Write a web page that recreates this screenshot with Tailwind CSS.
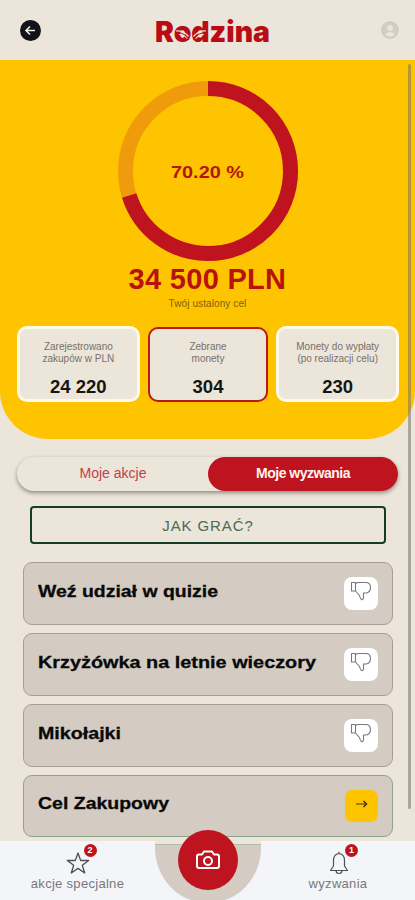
<!DOCTYPE html>
<html lang="pl">
<head>
<meta charset="utf-8">
<meta name="viewport" content="width=device-width, initial-scale=1">
<title>Rodzina</title>
<script src="https://cdn.jsdelivr.net/npm/@tailwindcss/browser@4"></script>
</head>
<body class="bg-[#ece5d9] font-['Liberation_Sans',sans-serif]">
<svg class="hidden">
  <symbol id="thumb" viewBox="0 0 22 20">
    <path d="M1.500 1.500h4v8.500h-4zM5.500 2.500Q7 1.500 9 1.500h7.500Q20.500 2 20.500 6.500T16.500 12H13.500v5Q13 19 11.500 18.700 10 17 9.500 14.500L5.500 10" fill="none" stroke="#77797c" stroke-width="1.100" stroke-linejoin="round"/>
  </symbol>
</svg>
<div class="relative flex h-[900px] w-[415px] flex-col overflow-hidden">
  <header class="flex h-[60px] shrink-0 items-center justify-between pr-[16px] pl-[20px]">
    <svg class="size-[21px]" viewBox="0 0 21 21"><circle cx="10.500" cy="10.500" r="10.500" fill="#111319"/><path d="M15 10.500H6.500M10 6.500l-4 4 4 4" fill="none" stroke="#f1ece4" stroke-width="1.600"/></svg>
    <svg class="ml-[1px] h-[44px] w-[124px] overflow-visible" viewBox="0 0 124 44">
      <text x="5" y="33.500" textLength="115" lengthAdjust="spacingAndGlyphs" font-family="Inter, sans-serif" font-weight="900" font-size="28.500" fill="#b90c16">Rodzina</text>
      <path d="M26 23q7-1 12.500 5.500M29 26.500q5 0 8.500 4M56 23q-7-1-12.500 5.500M54 26.500q-5 0-8.500 4" fill="none" stroke="#ece5d9" stroke-width="1.200"/>
      <path d="M28.500 25q6-.5 10.500 7M54 25q-6-.5-10.500 7" fill="none" stroke="#b90c16" stroke-width="1"/>
    </svg>
    <svg class="size-[18px]" viewBox="0 0 18 18"><circle cx="9" cy="9" r="8" fill="#d5cec5" stroke="#cfc8bf" stroke-width="1.500"/><circle cx="9" cy="7" r="2.800" fill="#ece5d9"/><path d="M4 14q5-6 10 0-5 3-10 0z" fill="#ece5d9"/></svg>
  </header>

  <section class="flex h-[379px] shrink-0 flex-col items-center rounded-b-[48px] bg-[#fec400] pt-[21px]">
    <div class="grid size-[180px] place-items-center">
      <svg class="col-start-1 row-start-1 size-[180px] -rotate-90" viewBox="0 0 180 180" fill="none" stroke-width="15">
        <circle cx="90" cy="90" r="82.500" stroke="#f09b0c"/>
        <circle cx="90" cy="90" r="82.500" stroke="#bf141f" pathLength="100" stroke-dasharray="70.200 100"/>
      </svg>
      <svg class="col-start-1 row-start-1 mt-[2px] h-[20px] w-[74px]" viewBox="0 0 74 20"><text x="0" y="16" textLength="73" lengthAdjust="spacingAndGlyphs" font-weight="700" font-size="17" fill="#b3140f">70.20 %</text></svg>
    </div>
    <div class="mt-[3px] h-[30px] text-[29px] leading-[30px] font-bold tracking-[0.300px] whitespace-nowrap text-[#b8120f]">34 500 PLN</div>
    <div class="mt-[4px] text-[10px] leading-[12px] tracking-[0.100px] text-[#80620f]">Twój ustalony cel</div>
    <div class="mt-[16px] flex w-full gap-[8px] pr-[16px] pl-[17px] text-center text-[10px] leading-[12px] whitespace-nowrap text-[#77716b]">
      <div class="h-[76px] flex-1 rounded-[10px] border-[3px] border-[#fff9e9] bg-[#ece5d9] pt-[12px]"><p>Zarejestrowano<br>zakupów w PLN</p><p class="mt-[12px] text-[18.500px] leading-[20px] font-bold text-[#151515]">24 220</p></div>
      <div class="mt-[1px] h-[75px] flex-1 rounded-[10px] border-2 border-[#bb1915] bg-[#ece5d9] pt-[12px]"><p>Zebrane<br>monety</p><p class="mt-[12px] text-[18.500px] leading-[20px] font-bold text-[#151515]">304</p></div>
      <div class="h-[76px] flex-1 rounded-[10px] border-[3px] border-[#fff9e9] bg-[#ece5d9] pt-[12px]"><p>Monety do wypłaty<br>(po realizacji celu)</p><p class="mt-[12px] text-[18.500px] leading-[20px] font-bold text-[#151515]">230</p></div>
    </div>
  </section>

  <div class="mt-[18px] mr-[17px] ml-[17px] flex h-[34px] shrink-0 rounded-full text-center text-[14px] leading-[33px] shadow-[0_2px_4px_rgba(0,0,0,0.4)]">
    <div class="w-[191px] pl-[1px] text-[#bf404c]">Moje akcje</div>
    <div class="flex-1 rounded-full bg-[#bd141f] font-bold tracking-[-0.500px] text-[#fff3ee]">Moje wyzwania</div>
  </div>
  <div class="mt-[15px] ml-[30px] h-[38px] w-[356px] shrink-0 rounded-[4px] border-2 border-[#143d27] text-center text-[15px] leading-[35px] tracking-[0.900px] text-[#4b6954]">JAK GRAĆ?</div>

  <main class="mt-[18px] ml-[23px] flex w-[370px] shrink-0 flex-col gap-[8px]">
    <div class="flex h-[63px] justify-between rounded-[9px] border border-[#a49e96] bg-[#d4ccc2] pr-[14px] pl-[14px]">
      <svg class="mt-[14px] h-[26px] w-[181px]" viewBox="0 0 181 26"><text x="0" y="19.500" textLength="180" lengthAdjust="spacingAndGlyphs" font-weight="700" font-size="17" fill="#090909" stroke="#090909" stroke-width=".3">Weź udział w quizie</text></svg>
      <div class="mt-[14px] flex h-[33px] w-[34px] justify-center rounded-[8px] bg-white pt-[4px]"><svg class="h-[20px] w-[22px]"><use href="#thumb"/></svg></div>
    </div>
    <div class="flex h-[63px] justify-between rounded-[9px] border border-[#a49e96] bg-[#d4ccc2] pr-[14px] pl-[14px]">
      <svg class="mt-[14px] h-[26px] w-[279px]" viewBox="0 0 279 26"><text x="0" y="19.500" textLength="278" lengthAdjust="spacingAndGlyphs" font-weight="700" font-size="17" fill="#090909" stroke="#090909" stroke-width=".3">Krzyżówka na letnie wieczory</text></svg>
      <div class="mt-[14px] flex h-[33px] w-[34px] justify-center rounded-[8px] bg-white pt-[4px]"><svg class="h-[20px] w-[22px]"><use href="#thumb"/></svg></div>
    </div>
    <div class="flex h-[63px] justify-between rounded-[9px] border border-[#a49e96] bg-[#d4ccc2] pr-[14px] pl-[14px]">
      <svg class="mt-[14px] h-[26px] w-[84px]" viewBox="0 0 84 26"><text x="0" y="19.500" textLength="83" lengthAdjust="spacingAndGlyphs" font-weight="700" font-size="17" fill="#090909" stroke="#090909" stroke-width=".3">Mikołajki</text></svg>
      <div class="mt-[14px] flex h-[33px] w-[34px] justify-center rounded-[8px] bg-white pt-[4px]"><svg class="h-[20px] w-[22px]"><use href="#thumb"/></svg></div>
    </div>
    <div class="flex h-[62px] justify-between rounded-[9px] border border-[#8aa58c] bg-[#d4ccc2] pr-[14px] pl-[14px]">
      <svg class="mt-[14px] h-[26px] w-[132px]" viewBox="0 0 132 26"><text x="0" y="19" textLength="131" lengthAdjust="spacingAndGlyphs" font-weight="700" font-size="17" fill="#090909" stroke="#090909" stroke-width=".3">Cel Zakupowy</text></svg>
      <div class="mt-[14px] flex h-[32px] w-[33px] items-center justify-center rounded-[7px] bg-[#fec400]"><svg class="mb-[4px] h-[8px] w-[12px]" viewBox="0 0 12 8" fill="none" stroke="#302807"><path d="M0 4h11" stroke-width=".9"/><path d="M7.500 1l3 3-3 3" stroke-width="1.300"/></svg></div>
    </div>
  </main>

  <div class="absolute top-[64px] left-[408px] h-[745px] w-[3px] rounded-full bg-[#77716b]/55"></div>

  <nav class="absolute bottom-0 left-0 flex h-[59px] w-full justify-between bg-[#f4f5f8] text-[13px] leading-[14px] text-[#77787b]">
    <div class="flex w-[155px] flex-col items-center pt-[10px]">
      <div class="relative h-[24px] w-[24px]">
        <svg class="size-[24px]" viewBox="0 0 24 24"><path d="M12 2l2.700 7.500h8l-6.400 4.800L18.700 22 12 17.400 5.300 22l2.400-7.700L1.300 9.500h8z" fill="none" stroke="#4e5053" stroke-width="1.300" stroke-linejoin="round"/></svg>
        <span class="absolute -top-[7px] left-[18px] size-[13px] rounded-full bg-[#bd141f] text-center text-[9px] leading-[13px] font-bold text-white">2</span>
      </div>
      <span class="mt-[2px] tracking-[0.300px] whitespace-nowrap">akcje specjalne</span>
    </div>
    <div class="relative w-[106px]">
      <svg class="absolute -top-[12px] left-0 h-[71px] w-[106px]" viewBox="0 0 106 71">
        <path d="M0 12H106V19A53 55 0 0 1 0 19z" fill="#d4ccc2"/>
        <path d="M0 13.500H106" stroke="#ece5d9" stroke-width="3"/><path d="M0 15.500H106" stroke="#b5b7a7"/>
        <circle cx="53" cy="31" r="30" fill="#bd141f"/>
        <g fill="none" stroke="#fff" stroke-width="2"><path d="M44 25.500h3l2-3h8l2 3h3q2 0 2 2V37q0 2-2 2H44q-2 0-2-2v-9.500q0-2 2-2z" stroke-linejoin="round"/><circle cx="53" cy="32" r="4"/></g>
      </svg>
    </div>
    <div class="flex w-[154px] flex-col items-center pt-[10px]">
      <div class="relative left-[1px] h-[24px] w-[24px]">
        <svg class="size-[24px]" viewBox="0 0 24 24" fill="none" stroke="#4e5053" stroke-width="1.200"><path d="M12 2.500q-5.500.8-5.500 7v5.500l-3 4.500h17l-3-4.500V9.500q0-6.200-5.500-7zM12 .8v2M9 19.500q0 3 3 3t3-3" stroke-linejoin="round"/></svg>
        <span class="absolute -top-[7px] left-[18px] size-[13px] rounded-full bg-[#bd141f] text-center text-[9px] leading-[13px] font-bold text-white">1</span>
      </div>
      <span class="mt-[2px] tracking-[0.300px]">wyzwania</span>
    </div>
  </nav>
</div>
</body>
</html>
